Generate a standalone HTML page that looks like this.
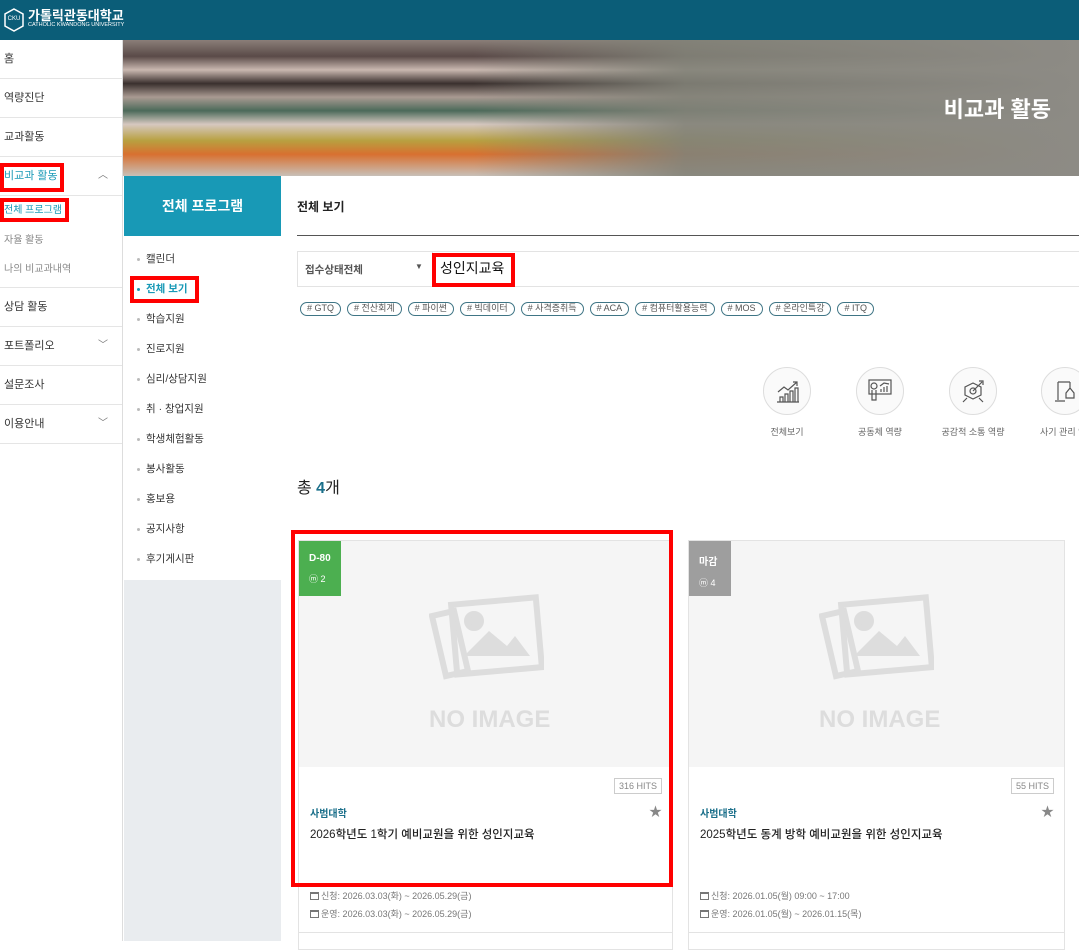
<!DOCTYPE html>
<html><head><meta charset="utf-8"><style>
*{box-sizing:border-box;margin:0;padding:0}
body{width:1079px;height:941px;overflow:hidden;position:relative;font-family:"Liberation Sans","Noto Sans CJK KR",sans-serif;background:#fff;color:#222}
.abs{position:absolute}
.hdr{left:0;top:0;width:1079px;height:40px;background:#0b5d78}
.side{left:0;top:40px;width:123px;height:901px;background:#fff;border-right:1px solid #ddd}
.side .it{height:39px;border-bottom:1px solid #e5e5e5;font-size:11px;line-height:38px;padding-left:4px;color:#333;position:relative}
.side .it .ch{position:absolute;right:14px;top:0;font-size:10px;color:#777}
.sub{font-size:10px;color:#888;padding-left:4px;height:29.5px;line-height:29px}
.red{position:absolute;border:4px solid #f00}
.banner{left:123px;top:40px;width:956px;height:136px;background:linear-gradient(180deg,#8a7e78 0%,#5a4a48 12%,#c9b8b0 22%,#3a302e 32%,#a99a92 42%,#4c6a5a 52%,#d6c8c0 62%,#b8a040 74%,#d87030 84%,#c8c0b8 100%)}
.banner:after{content:"";position:absolute;left:350px;top:0;right:0;bottom:0;background:linear-gradient(90deg,rgba(120,120,110,0) 0%,rgba(130,130,120,.9) 35%,#8d8b85 100%)}
.bt{right:28px;top:92px;color:#fff;font-size:22px;font-weight:bold;z-index:2}
.snav{left:124px;top:176px;width:157px;height:765px;background:#e9ecef}
.stitle{height:60px;background:#1899b6;color:#fff;font-weight:bold;font-size:14px;text-align:center;line-height:60px}
.slist{background:#fff;height:344px;padding-top:8px}
.slist div{height:30px;line-height:30px;font-size:10.5px;padding-left:22px;position:relative;color:#333}
.slist div:before{content:"";position:absolute;left:13px;top:14px;width:3px;height:3px;border-radius:50%;background:#bbb}
.slist div.on{color:#1899b6;font-weight:bold}
.slist div.on:before{background:#1899b6}
.tag{display:inline-block;height:14px;border:1.5px solid #3f7585;border-radius:8px;font-size:9px;line-height:11px;padding:0 6px;color:#555;margin-right:6px}
.ic{width:48px;height:48px;border-radius:50%;border:1px solid #ddd;background:#fafafa;position:absolute}
.icl{position:absolute;font-size:9px;color:#666;text-align:center;width:100px}
.card{border:1px solid #e3e3e3;background:#fff;position:absolute}
.img{height:226px;background:#f5f5f5;position:relative}
.badge{position:absolute;left:0;top:0;width:42px;height:55px;color:#fff;font-size:10px;font-weight:bold;padding:12px 0 0 10px}
.noimg{position:absolute;left:130px;top:165px;font-size:24px;font-weight:bold;color:#ddd}
.hits{position:absolute;right:10px;top:237px;border:1px solid #ccc;font-size:9px;color:#888;padding:2px 4px}
.cat{position:absolute;left:11px;top:264px;font-size:10px;font-weight:bold;color:#1a6f8a}
.ttl{position:absolute;left:11px;top:285px;font-size:11.5px;color:#222;font-weight:500}
.star{position:absolute;right:10px;top:260px;color:#888;font-size:13px}
.dt{position:absolute;left:11px;font-size:9px;color:#777}
.cal{display:inline-block;width:9px;height:8px;border:1px solid #777;border-top-width:2px;vertical-align:-1px;margin-right:2px}
</style></head><body>
<div class="abs hdr">
<svg class="abs" style="left:4px;top:8px" width="20" height="24"><path d="M10 1 L19 6 L19 18 L10 23 L1 18 L1 6Z" fill="none" stroke="#fff" stroke-width="1.5"/><text x="10" y="12" font-size="6" fill="#fff" text-anchor="middle" font-family="Liberation Sans">CKU</text></svg>
<div class="abs" style="left:28px;top:5px;color:#fff;font-size:13px;font-weight:bold">가톨릭관동대학교</div>
<div class="abs" style="left:28px;top:22px;color:#fff;font-size:5.5px">CATHOLIC KWANDONG UNIVERSITY</div>
</div>
<div class="abs side">
<div class="it">홈</div>
<div class="it">역량진단</div>
<div class="it">교과활동</div>
<div class="it" style="color:#1899b6">비교과 활동<span class="ch">︿</span></div>
<div style="border-bottom:1px solid #e5e5e5;height:92px">
<div class="sub" style="color:#1899b6">전체 프로그램</div>
<div class="sub">자율 활동</div>
<div class="sub">나의 비교과내역</div></div>
<div class="it">상담 활동</div>
<div class="it">포트폴리오<span class="ch">﹀</span></div>
<div class="it">설문조사</div>
<div class="it">이용안내<span class="ch">﹀</span></div>
</div>
<div class="abs banner"></div>
<div class="abs bt">비교과 활동</div>
<div class="abs snav"><div class="stitle">전체 프로그램</div>
<div class="slist"><div>캘린더</div><div class="on">전체 보기</div><div>학습지원</div><div>진로지원</div><div>심리/상담지원</div><div>취 · 창업지원</div><div>학생체험활동</div><div>봉사활동</div><div>홍보용</div><div>공지사항</div><div>후기게시판</div></div></div>
<div class="abs" style="left:297px;top:198px;font-size:12px;font-weight:bold">전체 보기</div>
<div class="abs" style="left:297px;top:235px;width:782px;height:1px;background:#555"></div>
<div class="abs" style="left:297px;top:251px;width:790px;height:36px;border:1px solid #e3e3e3"></div>
<div class="abs" style="left:432px;top:252px;width:1px;height:34px;background:#e3e3e3"></div>
<div class="abs" style="left:305px;top:262px;font-size:10.5px;font-weight:bold;color:#555">접수상태전체</div>
<div class="abs" style="left:415px;top:262px;font-size:8px;color:#555">▼</div>
<div class="abs" style="left:440px;top:258px;font-size:14px;color:#111">성인지교육</div>
<div class="abs" style="left:300px;top:298px;white-space:nowrap"><span class="tag"># GTQ</span><span class="tag"># 전산회계</span><span class="tag"># 파이썬</span><span class="tag"># 빅데이터</span><span class="tag"># 사격증취득</span><span class="tag"># ACA</span><span class="tag"># 컴퓨터활용능력</span><span class="tag"># MOS</span><span class="tag"># 온라인특강</span><span class="tag"># ITQ</span></div>
<div class="ic" style="left:763px;top:367px"></div><div class="icl" style="left:737px;top:425px">전체보기</div>
<div class="ic" style="left:856px;top:367px"></div><div class="icl" style="left:830px;top:425px">공동체 역량</div>
<div class="ic" style="left:949px;top:367px"></div><div class="icl" style="left:923px;top:425px">공감적 소통 역량</div>
<div class="ic" style="left:1041px;top:367px"></div><div class="icl" style="left:1040px;top:425px;text-align:left">사기 관리 역</div>
<svg class="abs" style="left:775px;top:378px" width="26" height="26" fill="none" stroke="#555" stroke-width="1.2"><path d="M2 24h22M5 24v-5h3v5M10 24v-8h3v8M15 24v-11h3v11M20 24v-14h3v14M3 14l6-5 4 3 9-8M18 4h4v4"/></svg>
<svg class="abs" style="left:867px;top:378px" width="26" height="26" fill="none" stroke="#555" stroke-width="1.2"><rect x="2" y="2" width="22" height="14"/><circle cx="7" cy="8" r="3"/><path d="M5 12v10h4V12M14 14v-3M17 14v-5M20 14v-6M13 8l4-3 5 1"/></svg>
<svg class="abs" style="left:960px;top:378px" width="26" height="26" fill="none" stroke="#555" stroke-width="1.2"><path d="M13 5l8 4v8l-8 4-8-4V9z"/><circle cx="13" cy="13" r="3"/><path d="M13 13l9-9M19 3h4v4M3 24l4-4M23 24l-4-4"/></svg>
<svg class="abs" style="left:1053px;top:378px" width="26" height="26" fill="none" stroke="#555" stroke-width="1.2"><path d="M5 4v18M2 23h10M5 4h12M17 4v6l-4 5v5h8v-5l-4-5"/></svg>
<div class="abs" style="left:297px;top:474px;font-size:16px">총 <b style="color:#1a6f8a">4</b>개</div>
<div class="card" style="left:298px;top:540px;width:375px;height:410px">
<div class="img"><div class="badge" style="background:#4caf50">D-80<div style="margin-top:8px;font-weight:normal;font-size:9px">ⓜ 2</div></div>
<svg class="abs" style="left:130px;top:50px" width="115" height="90" fill="none" stroke="#ddd" stroke-width="6"><path d="M3 25l22-5 14 60-22 5z"/><rect x="25" y="10" width="85" height="70" transform="rotate(-5 67 45)"/><circle cx="45" cy="30" r="7" fill="#ddd"/><path d="M35 65l25-25 18 15 8-10 15 20z" fill="#ddd" stroke="none"/></svg>
<div class="noimg">NO IMAGE</div></div>
<div class="hits">316 HITS</div><div class="cat">사범대학</div><div class="star">★</div>
<div class="ttl">2026학년도 1학기 예비교원을 위한 성인지교육</div>
<div class="dt" style="top:348px"><span class="cal"></span>신청: 2026.03.03(화) ~ 2026.05.29(금)</div>
<div class="dt" style="top:366px"><span class="cal"></span>운영: 2026.03.03(화) ~ 2026.05.29(금)</div>
<div class="abs" style="left:0;right:0;top:391px;height:1px;background:#e3e3e3"></div>
</div>
<div class="card" style="left:688px;top:540px;width:377px;height:410px">
<div class="img"><div class="badge" style="background:#9e9e9e">마감<div style="margin-top:8px;font-weight:normal;font-size:9px">ⓜ 4</div></div>
<svg class="abs" style="left:130px;top:50px" width="115" height="90" fill="none" stroke="#ddd" stroke-width="6"><path d="M3 25l22-5 14 60-22 5z"/><rect x="25" y="10" width="85" height="70" transform="rotate(-5 67 45)"/><circle cx="45" cy="30" r="7" fill="#ddd"/><path d="M35 65l25-25 18 15 8-10 15 20z" fill="#ddd" stroke="none"/></svg>
<div class="noimg">NO IMAGE</div></div>
<div class="hits">55 HITS</div><div class="cat">사범대학</div><div class="star">★</div>
<div class="ttl">2025학년도 동계 방학 예비교원을 위한 성인지교육</div>
<div class="dt" style="top:348px"><span class="cal"></span>신청: 2026.01.05(월) 09:00 ~ 17:00</div>
<div class="dt" style="top:366px"><span class="cal"></span>운영: 2026.01.05(월) ~ 2026.01.15(목)</div>
<div class="abs" style="left:0;right:0;top:391px;height:1px;background:#e3e3e3"></div>
</div>
<div class="red" style="left:0;top:163px;width:64px;height:29px"></div>
<div class="red" style="left:0;top:198px;width:69px;height:24px"></div>
<div class="red" style="left:130px;top:276px;width:69px;height:27px"></div>
<div class="red" style="left:432px;top:253px;width:83px;height:34px"></div>
<div class="red" style="left:291px;top:530px;width:382px;height:357px"></div>
</body></html>
